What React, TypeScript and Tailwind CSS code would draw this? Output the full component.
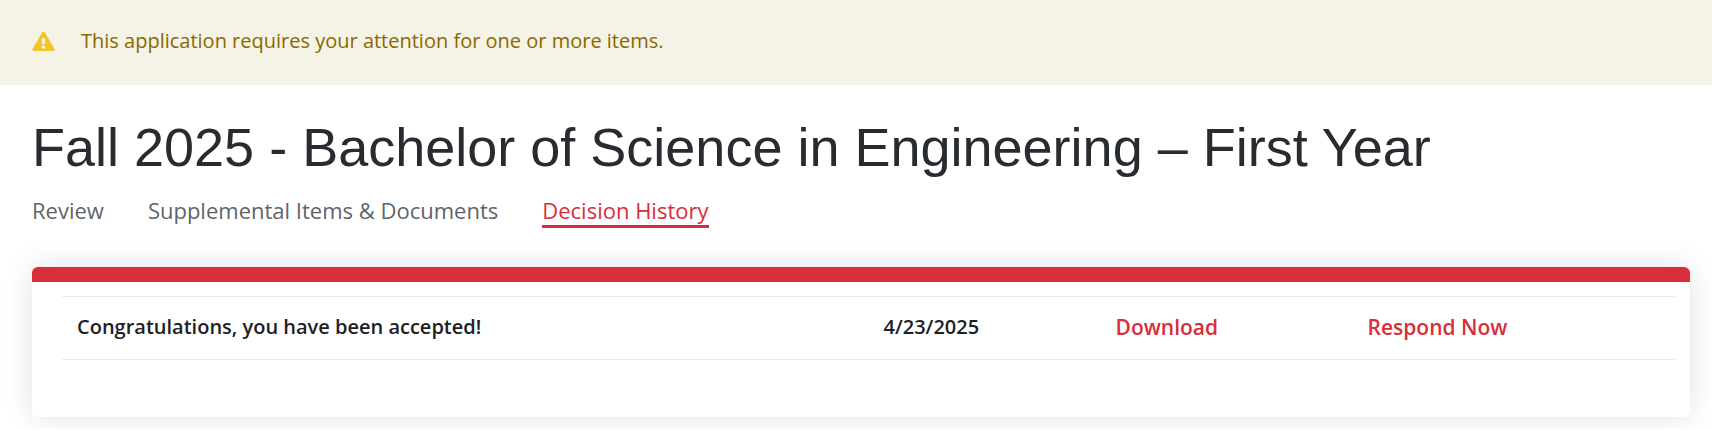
import React from 'react';

interface Tab {
  label: string;
  active?: boolean;
}

const TABS: Tab[] = [
  { label: 'Review' },
  { label: 'Supplemental Items & Documents' },
  { label: 'Decision History', active: true },
];

const DECISIONS = [
  { id: 1, title: 'Congratulations, you have been accepted!', date: '4/23/2025' },
];

const WarningIcon: React.FC = () => (
  <svg viewBox="0 0 23 21" className="w-[23px] h-[21px] shrink-0" aria-hidden="true">
    <path d="M11.500 2 21 18.500H2z" fill="#f0c62a" stroke="#f0c62a" strokeWidth="3" strokeLinejoin="round" />
    <path d="M9.700 7.200h3.600l-.5 6.100h-2.600z" fill="#f5f2e6" />
    <circle cx="11.500" cy="16.200" r="1.700" fill="#f5f2e6" />
  </svg>
);

const App: React.FC = () => {
  return (
    <div className="bg-white font-['Open_Sans',sans-serif] pb-3">
      <div className="flex items-center pt-[25px] pb-7 px-8 gap-[26px] bg-[#f5f2e6] text-[#8a6800]" role="alert">
        <WarningIcon />
        <p className="text-[20px] leading-8">This application requires your attention for one or more items.</p>
      </div>

      <main className="pl-8 pr-[22px] pt-[31px]">
        <h1 className="font-['Liberation_Sans',sans-serif] text-[54px] leading-[62px] text-[#282c30]">
          Fall 2025 - Bachelor of Science in Engineering – First Year
        </h1>

        <nav className="flex gap-11 mt-[17px]">
          {TABS.map(tab => (
            <a
              key={tab.label}
              href="#"
              className={`text-[22px] leading-[30px] border-b-3 ${tab.active ? 'text-[#d82e3a] border-[#d82e3a]' : 'text-[#5f6468] border-transparent'}`}
            >
              {tab.label}
            </a>
          ))}
        </nav>

        <section className="mt-[39px] border-t-[15px] border-[#d82e3a] rounded-md shadow-[0_0_30px_rgba(0,0,0,0.12)] pt-[14px] pr-[15px] pl-[30px] pb-[57px]">
          <table className="w-full table-fixed border-separate border-spacing-0 text-[20px] leading-[30px] font-semibold text-left">
            <tbody>
              {DECISIONS.map(decision => (
                <tr key={decision.id} className="text-[#1d2125] *:border-y *:border-[#ececec] *:px-[15px] *:pt-[15px] *:pb-[17px]">
                  <td className="w-1/2">{decision.title}</td>
                  <td className="w-[232px]">{decision.date}</td>
                  <td className="w-[252px]"><a href="#" className="block text-[21px] text-[#d82e3a]">Download</a></td>
                  <td><a href="#" className="block text-[21px] text-[#d82e3a]">Respond Now</a></td>
                </tr>
              ))}
            </tbody>
          </table>
        </section>
      </main>
    </div>
  );
};

export default App;
